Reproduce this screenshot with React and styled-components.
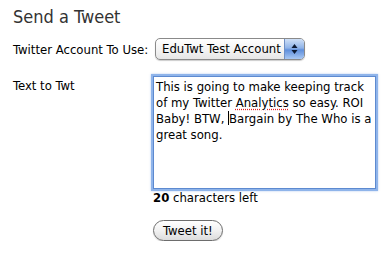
import React from 'react';
import styled, { createGlobalStyle } from 'styled-components';

const GlobalStyle = createGlobalStyle`
  html, body {
    margin: 0;
    padding: 0;
    background: #ffffff;
  }
  body {
    font-family: "DejaVu Sans Condensed", "DejaVu Sans", sans-serif;
    font-size: 13px;
    color: #000;
  }
`;

const Page = styled.div`
  padding: 6px 13px 0 13px;
`;

const Heading = styled.h1`
  margin: 0 0 10px;
  font-size: 18px;
  line-height: 22px;
  font-weight: normal;
  color: #333;
`;

const Form = styled.div`
  display: grid;
  grid-template-columns: 140px auto;
  row-gap: 14px;
  align-items: start;
`;

const Label = styled.div`
  line-height: 16px;
  padding-top: ${(p) => p.$top || 0}px;
`;

const Select = styled.div`
  display: flex;
  width: 150px;
  height: 22px;
  box-sizing: border-box;
  border: 1px solid #8a8a8a;
  border-radius: 5px;
  overflow: hidden;
  background: linear-gradient(#ffffff, #f2f2f2 60%, #e6e6e6);
  box-shadow: 0 1px 1px rgba(0, 0, 0, 0.2);
  margin-left: 2px;
`;

const SelectText = styled.span`
  flex: 1;
  padding-left: 6px;
  line-height: 20px;
  white-space: nowrap;
`;

const Stepper = styled.span`
  width: 19px;
  display: flex;
  align-items: center;
  justify-content: center;
  border-left: 1px solid #6f8fc4;
  background: linear-gradient(#cfe0f7, #8fb3e8 45%, #5f8fdc 55%, #a8c8f4);
`;

const Field = styled.div`
  display: flex;
  flex-direction: column;
  align-items: flex-start;
`;

const TextBox = styled.div`
  width: 223px;
  height: 113px;
  box-sizing: border-box;
  border: 1px solid #5d8ad0;
  outline: 2px solid #8fb4ea;
  box-shadow: 0 0 2px 2px rgba(120, 160, 225, 0.55);
  padding: 2px 2px;
  line-height: 16px;
  margin-top: 2px;
`;

const Misspelled = styled.span`
  text-decoration: underline dotted #e02020;
  text-underline-offset: 2px;
`;

const Caret = styled.span`
  display: inline-block;
  width: 1px;
  height: 14px;
  background: #000;
  vertical-align: -2px;
`;

const Counter = styled.div`
  margin-top: 1px;
  line-height: 16px;
  b {
    font-weight: bold;
  }
`;

const Button = styled.button`
  margin-top: 14px;
  font-family: inherit;
  font-size: 13px;
  color: #000;
  height: 21px;
  padding: 0 9px;
  border: 1px solid #6d6d6d;
  border-radius: 11px;
  background: linear-gradient(#ffffff, #f1f1f1 50%, #dcdcdc);
  box-shadow: 0 1px 1px rgba(0, 0, 0, 0.15);
  line-height: 19px;
`;

export default function App() {
  return (
    <Page>
      <GlobalStyle />
      <Heading>Send a Tweet</Heading>
      <Form>
        <Label $top={4}>Twitter Account To Use:</Label>
        <Select>
          <SelectText>EduTwt Test Account</SelectText>
          <Stepper>
            <svg width="7" height="12" viewBox="0 0 7 12">
              <path d="M3.5 1 L6.5 5 L0.5 5 Z" fill="#0c1a33" />
              <path d="M3.5 11 L6.5 7 L0.5 7 Z" fill="#0c1a33" />
            </svg>
          </Stepper>
        </Select>
        <Label $top={4}>Text to Twt</Label>
        <Field>
          <TextBox>
            This is going to make keeping track of my Twitter{' '}
            <Misspelled>Analytics</Misspelled> so easy. ROI Baby! BTW, <Caret />Bargain by
            The Who is a great song.
          </TextBox>
          <Counter>
            <b>20</b> characters left
          </Counter>
          <Button>Tweet it!</Button>
        </Field>
      </Form>
    </Page>
  );
}
